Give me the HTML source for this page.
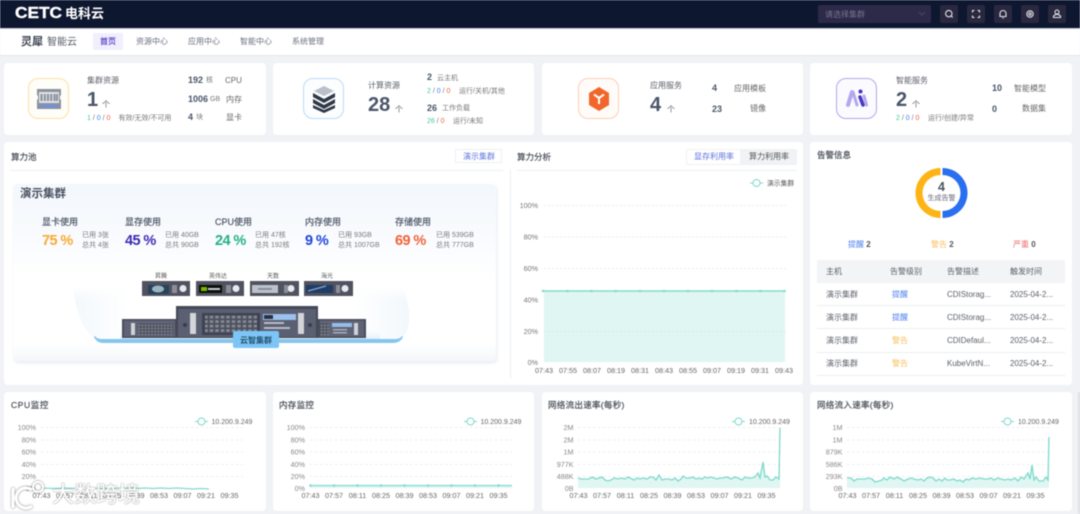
<!DOCTYPE html>
<html lang="zh"><head><meta charset="utf-8"><title>Dashboard</title>
<style>
html,body{margin:0;padding:0;width:1080px;height:514px;overflow:hidden;background:#f0f2f5}
#p{position:relative;width:1080px;height:514px;overflow:hidden;font-family:"Liberation Sans","Noto Sans CJK SC",sans-serif;color:#5a5f68;font-size:8px;filter:blur(.4px)}
.b{position:absolute}
.c{position:absolute;background:#fff;border-radius:4px}
.t{position:absolute;line-height:0;white-space:nowrap}
.k{font-weight:700;color:#4a5568}
.s{font-size:7px;color:#777}
.g{color:#3ccf91}.u{color:#3b82f6}.r{color:#ef5d42}
.big{font-size:20px;font-weight:700;color:#4a5568}
.ic{position:absolute;width:39px;height:39px;border-radius:10px;top:78px;background:#fff}
.ic svg{position:absolute;left:0;top:0}
.hb{position:absolute;top:5px;width:18px;height:18px;background:#29283f;border-radius:2px}
.hb svg{position:absolute;left:0;top:0}
.h{font-size:9px;color:#4f5868;-webkit-text-stroke:.2px #4f5868}
.pc{font-size:14.5px;font-weight:700;letter-spacing:-.6px}
.ti{font-size:8.5px;color:#4a4f58;-webkit-text-stroke:.2px #4a4f58}
svg text{font-family:"Liberation Sans","Noto Sans CJK SC",sans-serif}
</style></head><body><div id="p">

<div class="b" style="left:0;top:0;width:1080px;height:28px;background:#0e1730"></div>
<div class="b" style="left:0;top:28px;width:1080px;height:1px;background:#c5cad2"></div>
<div class="b" style="left:0;top:29px;width:1080px;height:26px;background:#fff;border-bottom:1px solid #e4e6ea"></div>

<div class="t" style="left:15px;top:14px;font-size:16px;font-weight:700;color:#fff;transform:scaleX(1.08);transform-origin:left;-webkit-text-stroke:.4px #fff">CETC</div>
<div class="t" style="left:65px;top:14px;font-size:13px;font-weight:700;color:#fff">电科云</div>

<div class="b" style="left:818px;top:5px;width:113px;height:18px;background:#2c2a48;border-radius:2px"></div>
<div class="t" style="left:825px;top:14.500px;font-size:8px;color:#77758c">请选择集群</div>
<svg class="b" style="left:918px;top:11px" width="8" height="6"><path d="M1 1l3 3 3-3" fill="none" stroke="#47465f" stroke-width="1"/></svg>
<div class="hb" style="left:940px"><svg width="18" height="18" fill="none" stroke="#e4e6ee" stroke-width="1.1"><circle cx="8.800" cy="8.600" r="3.200"/><path d="M11.200 11l1.500 1.500"/></svg></div>
<div class="hb" style="left:967px"><svg width="18" height="18" fill="none" stroke="#e4e6ee" stroke-width="1.1"><path d="M5.500 7.500v-2h2M10.500 5.500h2v2M12.500 10.500v2h-2M7.500 12.500h-2v-2"/></svg></div>
<div class="hb" style="left:994px"><svg width="18" height="18" fill="none" stroke="#e4e6ee" stroke-width="1.1"><path d="M6 11.500V8.500a3 3 0 0 1 6 0v3zM8.200 13h1.600"/></svg></div>
<div class="hb" style="left:1021px"><svg width="18" height="18" fill="none" stroke="#e4e6ee" stroke-width="1.1"><circle cx="9" cy="9" r="3.200"/><circle cx="9" cy="9" r="1.200"/></svg></div>
<div class="hb" style="left:1048px"><svg width="18" height="18" fill="none" stroke="#e4e6ee" stroke-width="1.1"><circle cx="9" cy="7" r="2"/><path d="M5.500 12.500h7v-1.500l-2-1.500h-3l-2 1.500z"/></svg></div>

<div class="t" style="left:21px;top:42px;font-size:11px;font-weight:700;color:#3d4452">灵犀</div>
<div class="t" style="left:47px;top:42.500px;font-size:10px;color:#555c68">智能云</div>
<div class="b" style="left:93px;top:33px;width:30px;height:17px;background:#f1effd;border-radius:2px"></div>
<div class="t" style="left:100px;top:42px;color:#5a43c9;-webkit-text-stroke:.2px #5a43c9">首页</div>
<div class="t" style="left:136px;top:42px;color:#6b7280">资源中心</div>
<div class="t" style="left:188px;top:42px;color:#6b7280">应用中心</div>
<div class="t" style="left:240px;top:42px;color:#6b7280">智能中心</div>
<div class="t" style="left:292px;top:42px;color:#6b7280">系统管理</div>

<div class="c" style="left:4px;top:63px;width:262px;height:72px"></div>
<div class="c" style="left:273px;top:63px;width:261px;height:72px"></div>
<div class="c" style="left:542px;top:63px;width:261px;height:72px"></div>
<div class="c" style="left:810px;top:63px;width:262px;height:72px"></div>
<div class="c" style="left:4px;top:142px;width:799px;height:243px"></div>
<div class="c" style="left:810px;top:142px;width:262px;height:243px"></div>
<div class="c" style="left:4px;top:392px;width:262px;height:119px"></div>
<div class="c" style="left:273px;top:392px;width:261px;height:119px"></div>
<div class="c" style="left:542px;top:392px;width:261px;height:119px"></div>
<div class="c" style="left:810px;top:392px;width:262px;height:119px"></div>
<div class="b" style="left:1078px;top:392px;width:2px;height:122px;background:#dfe1e5"></div>

<div class="ic" style="left:28px;border:1px solid #fbe0a8;background:#fffdf7"><svg width="39" height="39"><path d="M8 10h24v6l-1 1v3l1 1v9H8v-9l1-1v-3l-1-1z" fill="#8c929c"/><rect x="10" y="13" width="20" height="11" fill="#dfe2e8"/><g fill="#8a8f9a"><rect x="11.500" y="15" width="2" height="7"/><rect x="14.800" y="15" width="2" height="7"/><rect x="18" y="15" width="2" height="7"/><rect x="21.200" y="15" width="2" height="7"/><rect x="24.500" y="15" width="2" height="7"/><rect x="27" y="15" width="2" height="7"/></g><rect x="11" y="26" width="18" height="2.500" fill="#6f8fe4"/></svg></div>
<div class="ic" style="left:303px;border:1px solid #b9dcf9;background:#fbfdff"><svg width="39" height="39"><path d="M20 7l10 5-10 5-10-5z" fill="#b9c0cb"/><path d="M9 14l11 6 11-6v4l-11 6-11-6z" fill="#2f3846"/><path d="M9 20l11 6 11-6v4l-11 6-11-6z" fill="#2f3846"/><path d="M9 26l11 5 11-5v3l-11 5-11-5z" fill="#2f3846"/><path d="M13 21.500l4 2M23 23.500l4-2" stroke="#fff" stroke-width=".8"/></svg></div>
<div class="ic" style="left:578px;border:1px solid #fbcfb9;background:#fffbf9"><svg width="39" height="39"><path d="M20 8l10 6v12l-10 6-10-6v-12z" fill="#f2662b"/><path d="M15 15.500l5 3.500 5-3.500M20 19v6" stroke="#fff" stroke-width="2" fill="none"/></svg></div>
<div class="ic" style="left:836px;border:1px solid #b5a7ea;background:#fbfaff"><svg width="39" height="39"><path d="M15 13L11 26" stroke="#b3a8f0" stroke-width="4" stroke-linecap="round"/><path d="M16 13l4 13" stroke="#b3a8f0" stroke-width="3" stroke-linecap="round"/><path d="M23 18l3 8" stroke="#4636c0" stroke-width="3.500" stroke-linecap="round"/><circle cx="23.500" cy="12.500" r="2" fill="#4636c0"/><path d="M27 17l2.500 9" stroke="#b3a8f0" stroke-width="3" stroke-linecap="round"/></svg></div>

<div class="t" style="left:87px;top:80.500px">集群资源</div>
<div class="t big" style="left:87px;top:100px">1</div>
<div class="t" style="left:102px;top:104.500px;font-size:8px">个</div>
<div class="t s" style="left:87px;top:118.500px;white-space:pre"><span class="g">1</span> / <span class="u">0</span> / <span class="r">0</span></div>
<div class="t s" style="left:118.500px;top:118.500px">有效/无效/不可用</div>
<div class="t k" style="left:188px;top:80px;font-size:9px">192</div><div class="t s" style="left:206px;top:81px">核</div><div class="t" style="left:225px;top:81px;color:#666">CPU</div>
<div class="t k" style="left:188px;top:99px;font-size:9px">1006</div><div class="t s" style="left:210px;top:99.500px">GB</div><div class="t" style="left:226px;top:99.500px;color:#666">内存</div>
<div class="t k" style="left:188px;top:117px;font-size:9px">4</div><div class="t s" style="left:196px;top:117.500px">块</div><div class="t" style="left:226px;top:117.500px;color:#666">显卡</div>

<div class="t" style="left:368px;top:86px">计算资源</div>
<div class="t big" style="left:368px;top:105px">28</div>
<div class="t" style="left:395px;top:109.500px;font-size:8px">个</div>
<div class="t k" style="left:427px;top:77px;font-size:9px">2</div><div class="t s" style="left:437px;top:78.500px">云主机</div>
<div class="t s" style="left:427px;top:91.500px;white-space:pre"><span class="g">2</span> / <span class="u">0</span> / <span class="r">0</span></div><div class="t s" style="left:459px;top:91.500px">运行/关机/其他</div>
<div class="t k" style="left:427px;top:107.500px;font-size:9px">26</div><div class="t s" style="left:442px;top:108.500px">工作负载</div>
<div class="t s" style="left:427px;top:122px;white-space:pre"><span class="g">26</span> / <span class="r">0</span></div><div class="t s" style="left:453px;top:122px">运行/未知</div>

<div class="t" style="left:650px;top:86px">应用服务</div>
<div class="t big" style="left:650px;top:105px">4</div>
<div class="t" style="left:667px;top:109.500px;font-size:8px">个</div>
<div class="t k" style="left:712px;top:88px;font-size:9px">4</div><div class="t" style="left:734px;top:88.500px;color:#666">应用模板</div>
<div class="t k" style="left:712px;top:108.500px;font-size:9px">23</div><div class="t" style="left:750px;top:109px;color:#666">镜像</div>

<div class="t" style="left:896px;top:80.500px">智能服务</div>
<div class="t big" style="left:896px;top:100px">2</div>
<div class="t" style="left:912px;top:104.500px;font-size:8px">个</div>
<div class="t s" style="left:896px;top:118.500px;white-space:pre"><span class="g">2</span> / <span class="u">0</span> / <span class="r">0</span></div><div class="t s" style="left:928px;top:118.500px">运行/创建/异常</div>
<div class="t k" style="left:992px;top:88px;font-size:9px">10</div><div class="t" style="left:1014px;top:88.500px;color:#666">智能模型</div>
<div class="t k" style="left:992px;top:108.500px;font-size:9px">0</div><div class="t" style="left:1022px;top:109px;color:#666">数据集</div>

<div class="t ti" style="left:11px;top:157px">算力池</div>
<div class="b" style="left:455px;top:149px;width:47px;height:14px;border:1px solid #eceef2;box-sizing:border-box"></div>
<div class="t" style="left:463px;top:156.500px;color:#5d72de">演示集群</div>
<div class="b" style="left:10px;top:170px;width:493px;height:1px;background:#eceef1"></div>

<div class="b" style="left:13px;top:184px;width:483px;height:177px;border-radius:4px;background:linear-gradient(#f3f8fd 0,#f9fbfe 30%,#fff 52%,#fff 90%,#f4f7fb 100%);box-shadow:1px 2px 3px rgba(190,200,215,.35)"></div>
<div class="t" style="left:20px;top:194px;font-size:11.500px;font-weight:700;color:#4a5260">演示集群</div>

<div class="t h" style="left:42px;top:221.500px">显卡使用</div><div class="t pc" style="left:42px;top:241px;color:#f9a82f">75 %</div><div class="t s" style="left:82px;top:235.500px">已用 3张</div><div class="t s" style="left:82px;top:246px">总共 4张</div>
<div class="t h" style="left:125px;top:221.500px">显存使用</div><div class="t pc" style="left:125px;top:241px;color:#3a2bb4">45 %</div><div class="t s" style="left:165px;top:235.500px">已用 40GB</div><div class="t s" style="left:165px;top:246px">总共 90GB</div>
<div class="t h" style="left:215px;top:221.500px">CPU使用</div><div class="t pc" style="left:215px;top:241px;color:#22b083">24 %</div><div class="t s" style="left:255px;top:235.500px">已用 47核</div><div class="t s" style="left:255px;top:246px">总共 192核</div>
<div class="t h" style="left:305px;top:221.500px">内存使用</div><div class="t pc" style="left:305px;top:241px;color:#2145d8">9 %</div><div class="t s" style="left:338px;top:235.500px">已用 93GB</div><div class="t s" style="left:338px;top:246px">总共 1007GB</div>
<div class="t h" style="left:395px;top:221.500px">存储使用</div><div class="t pc" style="left:395px;top:241px;color:#f0633a">69 %</div><div class="t s" style="left:436px;top:235.500px">已用 539GB</div><div class="t s" style="left:436px;top:246px">总共 777GB</div>

<svg class="b" style="left:0;top:0" width="1080" height="514">
<defs>
<linearGradient id="st" x1="0" y1="0" x2="1" y2="0"><stop offset="0" stop-color="#f2f8fc"/><stop offset=".16" stop-color="#fff"/><stop offset=".84" stop-color="#fff"/><stop offset="1" stop-color="#f2f8fc"/></linearGradient>
<linearGradient id="sh" x1="0" y1="0" x2="0" y2="1"><stop offset="0" stop-color="#fff" stop-opacity="0"/><stop offset="1" stop-color="#dcecf9"/></linearGradient>
<linearGradient id="fd" x1="0" y1="0" x2="0" y2="1"><stop offset="0" stop-color="#fff"/><stop offset=".25" stop-color="#fff" stop-opacity="0"/></linearGradient>
<pattern id="dt" width="5.500" height="4.500" patternUnits="userSpaceOnUse"><rect width="5.500" height="4.500" fill="#4d505e"/><rect x=".8" y=".8" width="3.400" height="2.600" fill="#878b97"/></pattern>
<pattern id="ds" width="3.200" height="3" patternUnits="userSpaceOnUse"><rect width="3.200" height="3" fill="#4d505e"/><rect x=".6" y=".6" width="2" height="1.800" fill="#7d818d"/></pattern>
</defs>
<path d="M73 287C76 318 88 338 100 341H395C410 338 414 318 403 287z" fill="url(#st)"/>
<rect x="70" y="286" width="340" height="56" fill="url(#fd)"/>
<rect x="120" y="328" width="260" height="12" fill="url(#sh)"/>
<path d="M94 337c2 4 5 6 9 6H393c5 0 8-2 10-6l-1-1c-2 3-5 3-9 3H103c-3 0-6 0-8-3z" fill="#86c6ee"/>
<g>
<rect x="142" y="281" width="48" height="15" fill="#50525f"/><rect x="148" y="285" width="21" height="9" fill="#27435c"/><ellipse cx="158" cy="289" rx="6" ry="3.500" fill="#9bb5c0"/><circle cx="183" cy="288.500" r="3.500" fill="#e8e9ee"/><rect x="172" y="285" width="5" height="8" fill="#8b8e99"/>
<rect x="196" y="281" width="48" height="15" fill="#50525f"/><rect x="199" y="285" width="23" height="8" fill="#0c0f0b"/><rect x="201" y="287" width="6" height="4" fill="#76b900"/><rect x="208" y="288" width="12" height="2" fill="#ccc"/><circle cx="236" cy="288.500" r="3.500" fill="#e8e9ee"/><rect x="226" y="285" width="5" height="8" fill="#8b8e99"/>
<rect x="250" y="281" width="49" height="15" fill="#50525f"/><rect x="252" y="285" width="26" height="8" fill="#bcc2cb"/><rect x="258" y="288" width="14" height="2" fill="#8a909a"/><circle cx="291" cy="288.500" r="3.500" fill="#e8e9ee"/><rect x="284" y="285" width="4" height="8" fill="#8b8e99"/>
<rect x="304" y="281" width="49" height="15" fill="#50525f"/><rect x="306" y="285" width="27" height="8" fill="#1f3d66"/><path d="M308 291l18-5" stroke="#8aa7cf" stroke-width="1.200"/><circle cx="345" cy="288.500" r="3.500" fill="#e8e9ee"/><rect x="336" y="285" width="4" height="8" fill="#8b8e99"/>
</g>
<g font-size="6" fill="#555" text-anchor="middle"><text x="161" y="278">昇腾</text><text x="218" y="278">英伟达</text><text x="273" y="278">天数</text><text x="327" y="278">海光</text></g>
<g>
<rect x="122" y="319" width="55" height="19" fill="#4a4d5c"/><rect x="124" y="320.500" width="51" height="16" fill="#5f6375"/><rect x="131" y="323" width="4" height="12" fill="#cfd2d6"/><rect x="138" y="323" width="35" height="12" fill="url(#ds)"/>
<rect x="318" y="319" width="48" height="19" fill="#4a4d5c"/><rect x="320" y="320.500" width="44" height="16" fill="#5f6375"/><rect x="320" y="323" width="9" height="12" fill="url(#ds)"/><rect x="332" y="323" width="20" height="4" fill="#96bcea"/><rect x="354" y="323" width="4" height="12" fill="#cfd2d6"/><rect x="333" y="329" width="14" height="1.500" fill="#a8acb6"/><rect x="333" y="332" width="14" height="1.500" fill="#a8acb6"/>
<rect x="176" y="306" width="142" height="32" fill="#454857"/><rect x="178" y="309" width="138" height="28" fill="#5b5f72"/>
<rect x="190" y="313" width="6" height="21" fill="#d3d5d8"/><rect x="298" y="313" width="6" height="21" fill="#d3d5d8"/><circle cx="185" cy="325" r="2" fill="#3a3d49"/><circle cx="310" cy="325" r="2" fill="#3a3d49"/>
<rect x="202" y="313" width="58" height="22" fill="#3f4250"/><rect x="205" y="315" width="52" height="18" fill="url(#dt)"/>
<rect x="263" y="314" width="33" height="6" fill="#9cc1ec"/><rect x="264" y="315" width="9" height="4" fill="#2c3040"/>
<rect x="264" y="322" width="20" height="2" fill="#b8bcc6"/><rect x="264" y="327" width="26" height="2" fill="#b8bcc6"/>
</g>
<rect x="233" y="331" width="46" height="17" rx="2" fill="#7cc5f6"/>
<text x="256" y="343" font-size="8" font-weight="700" fill="#24506f" text-anchor="middle">云智集群</text>
</svg>

<div class="t ti" style="left:517px;top:157px">算力分析</div>
<div class="b" style="left:686px;top:149px;width:111px;height:16px;background:#f0f2f5;border-radius:2px"></div>
<div class="b" style="left:687px;top:150px;width:53px;height:14px;background:#fff"></div>
<div class="t" style="left:694px;top:157px;color:#5d72de">显存利用率</div>
<div class="t" style="left:749px;top:157px;color:#555">算力利用率</div>
<div class="b" style="left:517px;top:170px;width:280px;height:1px;background:#eceef1"></div>
<div class="b" style="left:510px;top:170px;width:1px;height:208px;background:#eceef1"></div>

<svg class="b" style="left:0;top:0" width="1080" height="514">
<g stroke="#e9ecee" stroke-dasharray="2 2"><path d="M544 205.500H786M544 237H786M544 268.500H786M544 331.500H786"/></g>
<rect x="544" y="291" width="241" height="71" fill="#e0f6f3"/>
<path d="M544 331.500H785" stroke="#d4ece8" stroke-dasharray="2 2"/>
<path d="M542.500 291H785" stroke="#85dacd" stroke-width="1.600"/>
<g fill="#85dacd"><circle cx="543" cy="291" r="1.300"/><circle cx="567.500" cy="291" r="1.300"/><circle cx="591.500" cy="291" r="1.300"/><circle cx="615.700" cy="291" r="1.300"/><circle cx="640" cy="291" r="1.300"/><circle cx="664" cy="291" r="1.300"/><circle cx="688" cy="291" r="1.300"/><circle cx="712" cy="291" r="1.300"/><circle cx="736.300" cy="291" r="1.300"/><circle cx="760.300" cy="291" r="1.300"/><circle cx="784.500" cy="291" r="1.300"/></g>
<path d="M750 183H763" stroke="#7fd9cc"/><circle cx="756.500" cy="183" r="3.500" fill="#fff" stroke="#7fd9cc"/>
<text x="767" y="185.500" font-size="6.800" fill="#555">演示集群</text>
<g font-size="7.200" fill="#777" text-anchor="end"><text x="538" y="208">100%</text><text x="538" y="239.500">80%</text><text x="538" y="271">60%</text><text x="538" y="302.500">40%</text><text x="538" y="334">20%</text><text x="538" y="365">0%</text></g>
<g font-size="7.200" fill="#666" text-anchor="middle"><text x="544" y="373">07:43</text><text x="568" y="373">07:55</text><text x="592" y="373">08:07</text><text x="616" y="373">08:19</text><text x="640" y="373">08:31</text><text x="664" y="373">08:43</text><text x="688" y="373">08:55</text><text x="712" y="373">09:07</text><text x="736" y="373">09:19</text><text x="760" y="373">09:31</text><text x="784" y="373">09:43</text></g>

<!-- donut -->
<path d="M942.500 168a25 25 0 0 1 0 50v-7a18 18 0 0 0 0-36z" fill="#2a6ff0"/>
<path d="M940.500 168a25 25 0 0 0 0 50v-7a18 18 0 0 1 0-36z" fill="#fdb414"/>

<!-- CPU -->
<g stroke="#eceef0" stroke-dasharray="2.500 2.500"><path d="M41 427.500H243M41 440H243M41 452H243M41 464.500H243M41 476.500H243"/></g>
<path d="M41 488l12 .5 12-.5 12 .5 12-.5 12 .5 12-.5 8 .5 8-.5 8 .5 8-.5 8 .5 8-.5 8 .5 8-.5 8 .5 8 .5 8-.5 8 .5" fill="none" stroke="#85dacd" stroke-width="1.200"/>
<!-- Memory -->
<g stroke="#eceef0" stroke-dasharray="2.500 2.500"><path d="M310 427.500H512M310 440H512M310 452H512M310 464.500H512M310 476.500H512"/></g>
<rect x="310" y="485" width="202" height="3" fill="#e0f6f3"/>
<path d="M310 485.500H512" stroke="#85dacd" stroke-width="1.300"/>
<g fill="#85dacd"><circle cx="310.500" cy="485.500" r="1.300"/><circle cx="334" cy="485.500" r="1.300"/><circle cx="357.500" cy="485.500" r="1.300"/><circle cx="381" cy="485.500" r="1.300"/><circle cx="404.500" cy="485.500" r="1.300"/><circle cx="428" cy="485.500" r="1.300"/><circle cx="451.500" cy="485.500" r="1.300"/><circle cx="475" cy="485.500" r="1.300"/><circle cx="498.500" cy="485.500" r="1.300"/></g>
<!-- Net out -->
<g stroke="#eceef0" stroke-dasharray="2.500 2.500"><path d="M578 427.500H781M578 440H781M578 452H781M578 464.500H781M578 476.500H781"/></g>
<path d="M578 478L581 479 585 479 589 479 592 477 596 479 599 478 602 477 605 480 608 481 611 480 614 478 618 479 621 478 625 479 628 477 632 479 634 480 637 478 640 479 643 478 647 479 650 477 653 477 656 480 659 475 662 480 665 479 669 479 672 480 675 478 678 481 681 479 683 476 686 478 690 478 693 477 696 479 699 478 702 479 705 477 708 478 711 477 714 478 717 479 720 478 723 478 727 477 731 479 735 477 738 478 742 480 745 477 748 478 752 478 755 477 758 473 760 478 763 462 765 477 767 476 770 480 773 480 776 477 779 479 780 428V488H578z" fill="#e0f6f3"/>
<path d="M578 478L581 479 585 479 589 479 592 477 596 479 599 478 602 477 605 480 608 481 611 480 614 478 618 479 621 478 625 479 628 477 632 479 634 480 637 478 640 479 643 478 647 479 650 477 653 477 656 480 659 475 662 480 665 479 669 479 672 480 675 478 678 481 681 479 683 476 686 478 690 478 693 477 696 479 699 478 702 479 705 477 708 478 711 477 714 478 717 479 720 478 723 478 727 477 731 479 735 477 738 478 742 480 745 477 748 478 752 478 755 477 758 473 760 478 763 462 765 477 767 476 770 480 773 480 776 477 779 479 780 428" fill="none" stroke="#7fd9cc" stroke-width="1.300"/>
<!-- Net in -->
<g stroke="#eceef0" stroke-dasharray="2.500 2.500"><path d="M847 427.500H1050M847 440H1050M847 452H1050M847 464.500H1050M847 476.500H1050"/></g>
<path d="M847 478L851 478 854 481 857 479 861 479 865 479 868 478 872 479 875 482 879 481 882 480 884 478 887 480 890 477 894 479 897 477 901 479 904 481 908 479 911 478 914 479 918 480 921 479 924 481 927 478 930 477 933 478 936 481 939 479 942 481 945 478 947 480 950 480 954 479 957 481 960 480 963 482 966 479 969 480 972 478 976 479 980 478 984 479 988 479 991 478 994 480 998 478 1001 479 1005 480 1008 479 1011 480 1015 478 1018 481 1021 477 1024 479 1028 473 1030 479 1032 465 1034 480 1036 477 1039 481 1043 481 1046 477 1048 480 1049 437V488H847z" fill="#e0f6f3"/>
<path d="M847 478L851 478 854 481 857 479 861 479 865 479 868 478 872 479 875 482 879 481 882 480 884 478 887 480 890 477 894 479 897 477 901 479 904 481 908 479 911 478 914 479 918 480 921 479 924 481 927 478 930 477 933 478 936 481 939 479 942 481 945 478 947 480 950 480 954 479 957 481 960 480 963 482 966 479 969 480 972 478 976 479 980 478 984 479 988 479 991 478 994 480 998 478 1001 479 1005 480 1008 479 1011 480 1015 478 1018 481 1021 477 1024 479 1028 473 1030 479 1032 465 1034 480 1036 477 1039 481 1043 481 1046 477 1048 480 1049 437" fill="none" stroke="#7fd9cc" stroke-width="1.300"/>

<!-- legends -->
<g stroke="#7fd9cc" fill="#fff"><path d="M195 421.500H208"/><circle cx="201.500" cy="421.500" r="3.500"/><path d="M464 421.500H477"/><circle cx="470.500" cy="421.500" r="3.500"/><path d="M732 421.500H745"/><circle cx="738.500" cy="421.500" r="3.500"/><path d="M1001 421.500H1014"/><circle cx="1007.500" cy="421.500" r="3.500"/></g>
<g font-size="7" fill="#666"><text x="211.500" y="424">10.200.9.249</text><text x="480.500" y="424">10.200.9.249</text><text x="749" y="424">10.200.9.249</text><text x="1018" y="424">10.200.9.249</text></g>
<!-- y labels -->
<g font-size="7.200" fill="#888" text-anchor="end">
<text x="36" y="430">100%</text><text x="36" y="442.500">80%</text><text x="36" y="454.500">60%</text><text x="36" y="467">40%</text><text x="36" y="479">20%</text><text x="36" y="491">0%</text>
<text x="305" y="430">100%</text><text x="305" y="442.500">80%</text><text x="305" y="454.500">60%</text><text x="305" y="467">40%</text><text x="305" y="479">20%</text><text x="305" y="491">0%</text>
<text x="573.500" y="430">2M</text><text x="573.500" y="442.500">2M</text><text x="573.500" y="454.500">1M</text><text x="573.500" y="467">977K</text><text x="573.500" y="479">488K</text><text x="573.500" y="491">0B</text>
<text x="842.500" y="430">1M</text><text x="842.500" y="442.500">1M</text><text x="842.500" y="454.500">879K</text><text x="842.500" y="467">586K</text><text x="842.500" y="479">293K</text><text x="842.500" y="491">0B</text>
</g>
<!-- x labels -->
<g font-size="7.200" fill="#666" text-anchor="middle">
<text x="41.500" y="498">07:43</text><text x="65" y="498">07:57</text><text x="88.500" y="498">08:11</text><text x="112" y="498">08:25</text><text x="135.500" y="498">08:39</text><text x="159" y="498">08:53</text><text x="182.500" y="498">09:07</text><text x="206" y="498">09:21</text><text x="229.500" y="498">09:35</text>
<text x="310.500" y="498">07:43</text><text x="334" y="498">07:57</text><text x="357.500" y="498">08:11</text><text x="381" y="498">08:25</text><text x="404.500" y="498">08:39</text><text x="428" y="498">08:53</text><text x="451.500" y="498">09:07</text><text x="475" y="498">09:21</text><text x="498.500" y="498">09:35</text>
<text x="578.500" y="498">07:43</text><text x="602" y="498">07:57</text><text x="625.500" y="498">08:11</text><text x="649" y="498">08:25</text><text x="672.500" y="498">08:39</text><text x="696" y="498">08:53</text><text x="719.500" y="498">09:07</text><text x="743" y="498">09:21</text><text x="766.500" y="498">09:35</text>
<text x="847.500" y="498">07:43</text><text x="871" y="498">07:57</text><text x="894.500" y="498">08:11</text><text x="918" y="498">08:25</text><text x="941.500" y="498">08:39</text><text x="965" y="498">08:53</text><text x="988.500" y="498">09:07</text><text x="1012" y="498">09:21</text><text x="1035.500" y="498">09:35</text>
</g>
</svg>

<div class="t ti" style="left:11px;top:405px;letter-spacing:.6px">CPU监控</div>
<div class="t ti" style="left:279px;top:405px;letter-spacing:.3px">内存监控</div>
<div class="t ti" style="left:548px;top:405px;letter-spacing:.3px">网络流出速率(每秒)</div>
<div class="t ti" style="left:817px;top:405px;letter-spacing:.3px">网络流入速率(每秒)</div>

<div class="t ti" style="left:817px;top:154.500px">告警信息</div>
<div class="t" style="left:941.500px;top:187px;font-size:12.500px;font-weight:700;color:#4a5260;transform:translateX(-50%)">4</div>
<div class="t" style="left:941.500px;top:199px;font-size:7px;color:#667;transform:translateX(-50%)">生成告警</div>
<div class="t" style="left:848px;top:245px;color:#4a7ff0">提醒 <span style="color:#555;font-weight:700">2</span></div>
<div class="t" style="left:931px;top:245px;color:#f9c05f">警告 <span style="color:#555;font-weight:700">2</span></div>
<div class="t" style="left:1013px;top:245px;color:#ee6f6f">严重 <span style="color:#555;font-weight:700">0</span></div>

<div class="b" style="left:817px;top:260px;width:248px;height:23px;background:#f3f4f6;border-radius:2px 2px 0 0"></div>
<div class="t" style="left:826px;top:271.500px">主机</div><div class="t" style="left:890px;top:271.500px">告警级别</div><div class="t" style="left:947px;top:271.500px">告警描述</div><div class="t" style="left:1010px;top:271.500px">触发时间</div>

<div class="t" style="left:826px;top:294.500px">演示集群</div><div class="t" style="left:892px;top:294.500px;color:#4a7ff0">提醒</div><div class="t" style="left:947px;top:294.500px">CDIStorag...</div><div class="t" style="left:1010px;top:294.500px">2025-04-2...</div>
<div class="b" style="left:817px;top:305px;width:248px;height:1px;background:#eceef1"></div>
<div class="t" style="left:826px;top:317.500px">演示集群</div><div class="t" style="left:892px;top:317.500px;color:#4a7ff0">提醒</div><div class="t" style="left:947px;top:317.500px">CDIStorag...</div><div class="t" style="left:1010px;top:317.500px">2025-04-2...</div>
<div class="b" style="left:817px;top:328px;width:248px;height:1px;background:#eceef1"></div>
<div class="t" style="left:826px;top:340.500px">演示集群</div><div class="t" style="left:892px;top:340.500px;color:#f9c05f">警告</div><div class="t" style="left:947px;top:340.500px">CDIDefaul...</div><div class="t" style="left:1010px;top:340.500px">2025-04-2...</div>
<div class="b" style="left:817px;top:352px;width:248px;height:1px;background:#eceef1"></div>
<div class="t" style="left:826px;top:363.500px">演示集群</div><div class="t" style="left:892px;top:363.500px;color:#f9c05f">警告</div><div class="t" style="left:947px;top:363.500px">KubeVirtN...</div><div class="t" style="left:1010px;top:363.500px">2025-04-2...</div>
<div class="b" style="left:817px;top:375px;width:248px;height:1px;background:#eceef1"></div>

<svg class="b" style="left:8px;top:480px;filter:drop-shadow(0 0 1px rgba(90,90,90,.8))" width="42" height="32" fill="none" stroke="#fff"><path d="M5 8v20" stroke-width="3"/><path d="M24 10a10 10 0 1 0 0 16" stroke-width="3"/><circle cx="30" cy="7" r="5" stroke-width="2"/></svg>
<div class="t" style="left:52px;top:494.500px;font-size:22px;color:#fff;-webkit-text-stroke:.3px #fff;text-shadow:0 0 1.500px rgba(80,80,80,.85),0 0 1px rgba(80,80,80,.6)">大数跨境</div>

</div></body></html>
